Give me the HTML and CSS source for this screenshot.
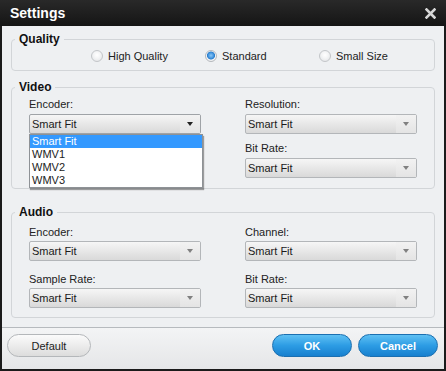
FILE: index.html
```html
<!DOCTYPE html>
<html>
<head>
<meta charset="utf-8">
<title>Settings</title>
<link rel="stylesheet" href="styles.css">
</head>
<body>
<div class="window">
  <div class="titlebar">
    <span class="title">Settings</span>
    <svg class="close" width="11" height="11" viewBox="0 0 11 11"><path d="M1.5 1.5 L9.5 9.5 M9.5 1.5 L1.5 9.5" stroke="#d6d6d6" stroke-width="2.6" stroke-linecap="square" fill="none"/></svg>
  </div>
  <div class="content">
    <fieldset class="group quality">
      <legend>Quality</legend>
      <div class="radios">
        <div class="radio"><span class="dot"></span>High Quality</div>
        <div class="radio"><span class="dot on"></span>Standard</div>
        <div class="radio"><span class="dot"></span>Small Size</div>
      </div>
    </fieldset>

    <fieldset class="group video">
      <legend>Video</legend>
      <div class="grid">
        <div class="field">
          <div class="lbl">Encoder:</div>
          <div class="select open">
            <span class="val">Smart Fit</span><span class="btn"><i class="arrow"></i></span>
            <ul class="menu">
              <li class="hl">Smart Fit</li>
              <li>WMV1</li>
              <li>WMV2</li>
              <li>WMV3</li>
            </ul>
          </div>
        </div>
        <div class="field">
          <div class="lbl">Resolution:</div>
          <div class="select"><span class="val">Smart Fit</span><span class="btn"><i class="arrow"></i></span></div>
        </div>
        <div class="field"></div>
        <div class="field">
          <div class="lbl">Bit Rate:</div>
          <div class="select"><span class="val">Smart Fit</span><span class="btn"><i class="arrow"></i></span></div>
        </div>
      </div>
    </fieldset>

    <fieldset class="group audio">
      <legend>Audio</legend>
      <div class="grid">
        <div class="field">
          <div class="lbl">Encoder:</div>
          <div class="select"><span class="val">Smart Fit</span><span class="btn"><i class="arrow"></i></span></div>
        </div>
        <div class="field">
          <div class="lbl">Channel:</div>
          <div class="select"><span class="val">Smart Fit</span><span class="btn"><i class="arrow"></i></span></div>
        </div>
        <div class="field">
          <div class="lbl">Sample Rate:</div>
          <div class="select"><span class="val">Smart Fit</span><span class="btn"><i class="arrow"></i></span></div>
        </div>
        <div class="field">
          <div class="lbl">Bit Rate:</div>
          <div class="select"><span class="val">Smart Fit</span><span class="btn"><i class="arrow"></i></span></div>
        </div>
      </div>
    </fieldset>
  </div>
  <div class="footer">
    <button class="b-default">Default</button>
    <button class="b-blue">OK</button>
    <button class="b-blue">Cancel</button>
  </div>
</div>
</body>
</html>
```

FILE: styles.css
```css
html, body {
  margin: 0;
  padding: 0;
  background: #1b1b1b;
}
body {
  font-family: "Liberation Sans", Arial, sans-serif;
  font-size: 11px;
  color: #222;
}
.window {
  width: 446px;
  height: 371px;
  box-sizing: border-box;
  display: flex;
  flex-direction: column;
  background: #1b1b1b;
  padding-bottom: 2px;
  border-radius: 0 0 5px 5px;
  overflow: hidden;
}
.titlebar {
  height: 26px;
  flex: none;
  display: flex;
  align-items: center;
  justify-content: space-between;
  padding: 0 10px;
  background: linear-gradient(#292929, #151515);
}
.title {
  color: #fff;
  font-weight: bold;
  font-size: 14px;
}
.content {
  flex: 1;
  margin: 0 2px;
  background: #eef0f2;
  padding: 6px 9px 0;
}
.group {
  margin: 0;
  padding: 0;
  border: 1px solid #d2d5d8;
  border-radius: 4px;
  min-width: 0;
}
.group legend {
  margin-left: 3px;
  padding: 0 4px;
  font-weight: bold;
  font-size: 12px;
  line-height: 14px;
  color: #111;
}
.video { margin-top: 9px; }
.audio { margin-top: 16px; }

.radios {
  display: flex;
  height: 18px;
  padding: 1px 0 5px 79px;
}
.radio {
  width: 114px;
  display: flex;
  align-items: center;
  gap: 5px;
  color: #222;
}
.dot {
  width: 12px;
  height: 12px;
  box-sizing: border-box;
  border-radius: 50%;
  border: 1px solid #c3c6c9;
  background: radial-gradient(circle at 50% 40%, #ffffff 0, #f4f5f6 40%, #dfe1e3 100%);
}
.dot.on {
  border-color: #b4b8bc;
  background: radial-gradient(circle at 50% 45%, #8cc8f6 0, #3b8fdc 3px, #2a7cc9 3.6px, #f6f7f8 4.4px, #dfe1e3 100%);
}

.grid {
  display: grid;
  grid-template-columns: 172px 172px;
  column-gap: 44px;
}
.video .grid {
  padding: 3px 17px 10px;
  row-gap: 7px;
}
.audio .grid {
  padding: 6px 17px 9px;
  row-gap: 11px;
}
.lbl {
  line-height: 14px;
  margin-bottom: 3px;
  color: #222;
}
.audio .lbl { margin-bottom: 2px; }

.select {
  position: relative;
  height: 20px;
  box-sizing: border-box;
  display: flex;
  border: 1px solid #b3b6b9;
  border-radius: 2px;
  background: linear-gradient(#f6f6f6, #e6e6e6 55%, #d9d9d9);
}
.val {
  flex: 1;
  padding-left: 2px;
  line-height: 18px;
  color: #1a1a1a;
}
.btn {
  width: 20px;
  display: flex;
  align-items: center;
  justify-content: center;
  background: linear-gradient(#f2f2f2, #e4e4e4);
}
.arrow {
  width: 0;
  height: 0;
  border-left: 3.5px solid transparent;
  border-right: 3.5px solid transparent;
  border-top: 4px solid #808080;
}
.open .arrow { border-top-color: #222; }
.open { border-color: #9fa3a7; }

.menu {
  position: absolute;
  top: calc(100% + 1px);
  left: -1px;
  width: 174px;
  box-sizing: border-box;
  margin: 0;
  padding: 0;
  list-style: none;
  background: #fff;
  border: 1px solid #8e9296;
  box-shadow: 1px 2px 1px rgba(0, 0, 0, 0.35);
  z-index: 5;
}
.menu li {
  height: 13px;
  line-height: 13px;
  padding-left: 2px;
  color: #222;
}
.menu li.hl {
  background: #3399ff;
  color: #fff;
}

.footer {
  flex: none;
  height: 35px;
  margin: 0 2px;
  display: flex;
  align-items: flex-start;
  gap: 6px;
  padding: 6px 6px 0 5px;
  border-top: 1px solid #b6babe;
  background: linear-gradient(#f3f4f5, #e5e6e8);
}
.footer button {
  height: 23px;
  border-radius: 12px;
  font-family: "Liberation Sans", Arial, sans-serif;
  font-size: 11px;
  padding: 0;
  cursor: pointer;
}
.b-default {
  width: 84px;
  margin-right: auto;
  border: 1px solid #b4b7ba;
  background: linear-gradient(#fbfbfb, #ececec 50%, #dcdcdc);
  color: #222;
}
.b-blue {
  width: 80px;
  border: 1px solid #1b6fb0;
  background: linear-gradient(#5ec0f3, #2d9ce4 50%, #1780cf);
  color: #fff;
  font-weight: bold;
  font-size: 12px;
}
```
